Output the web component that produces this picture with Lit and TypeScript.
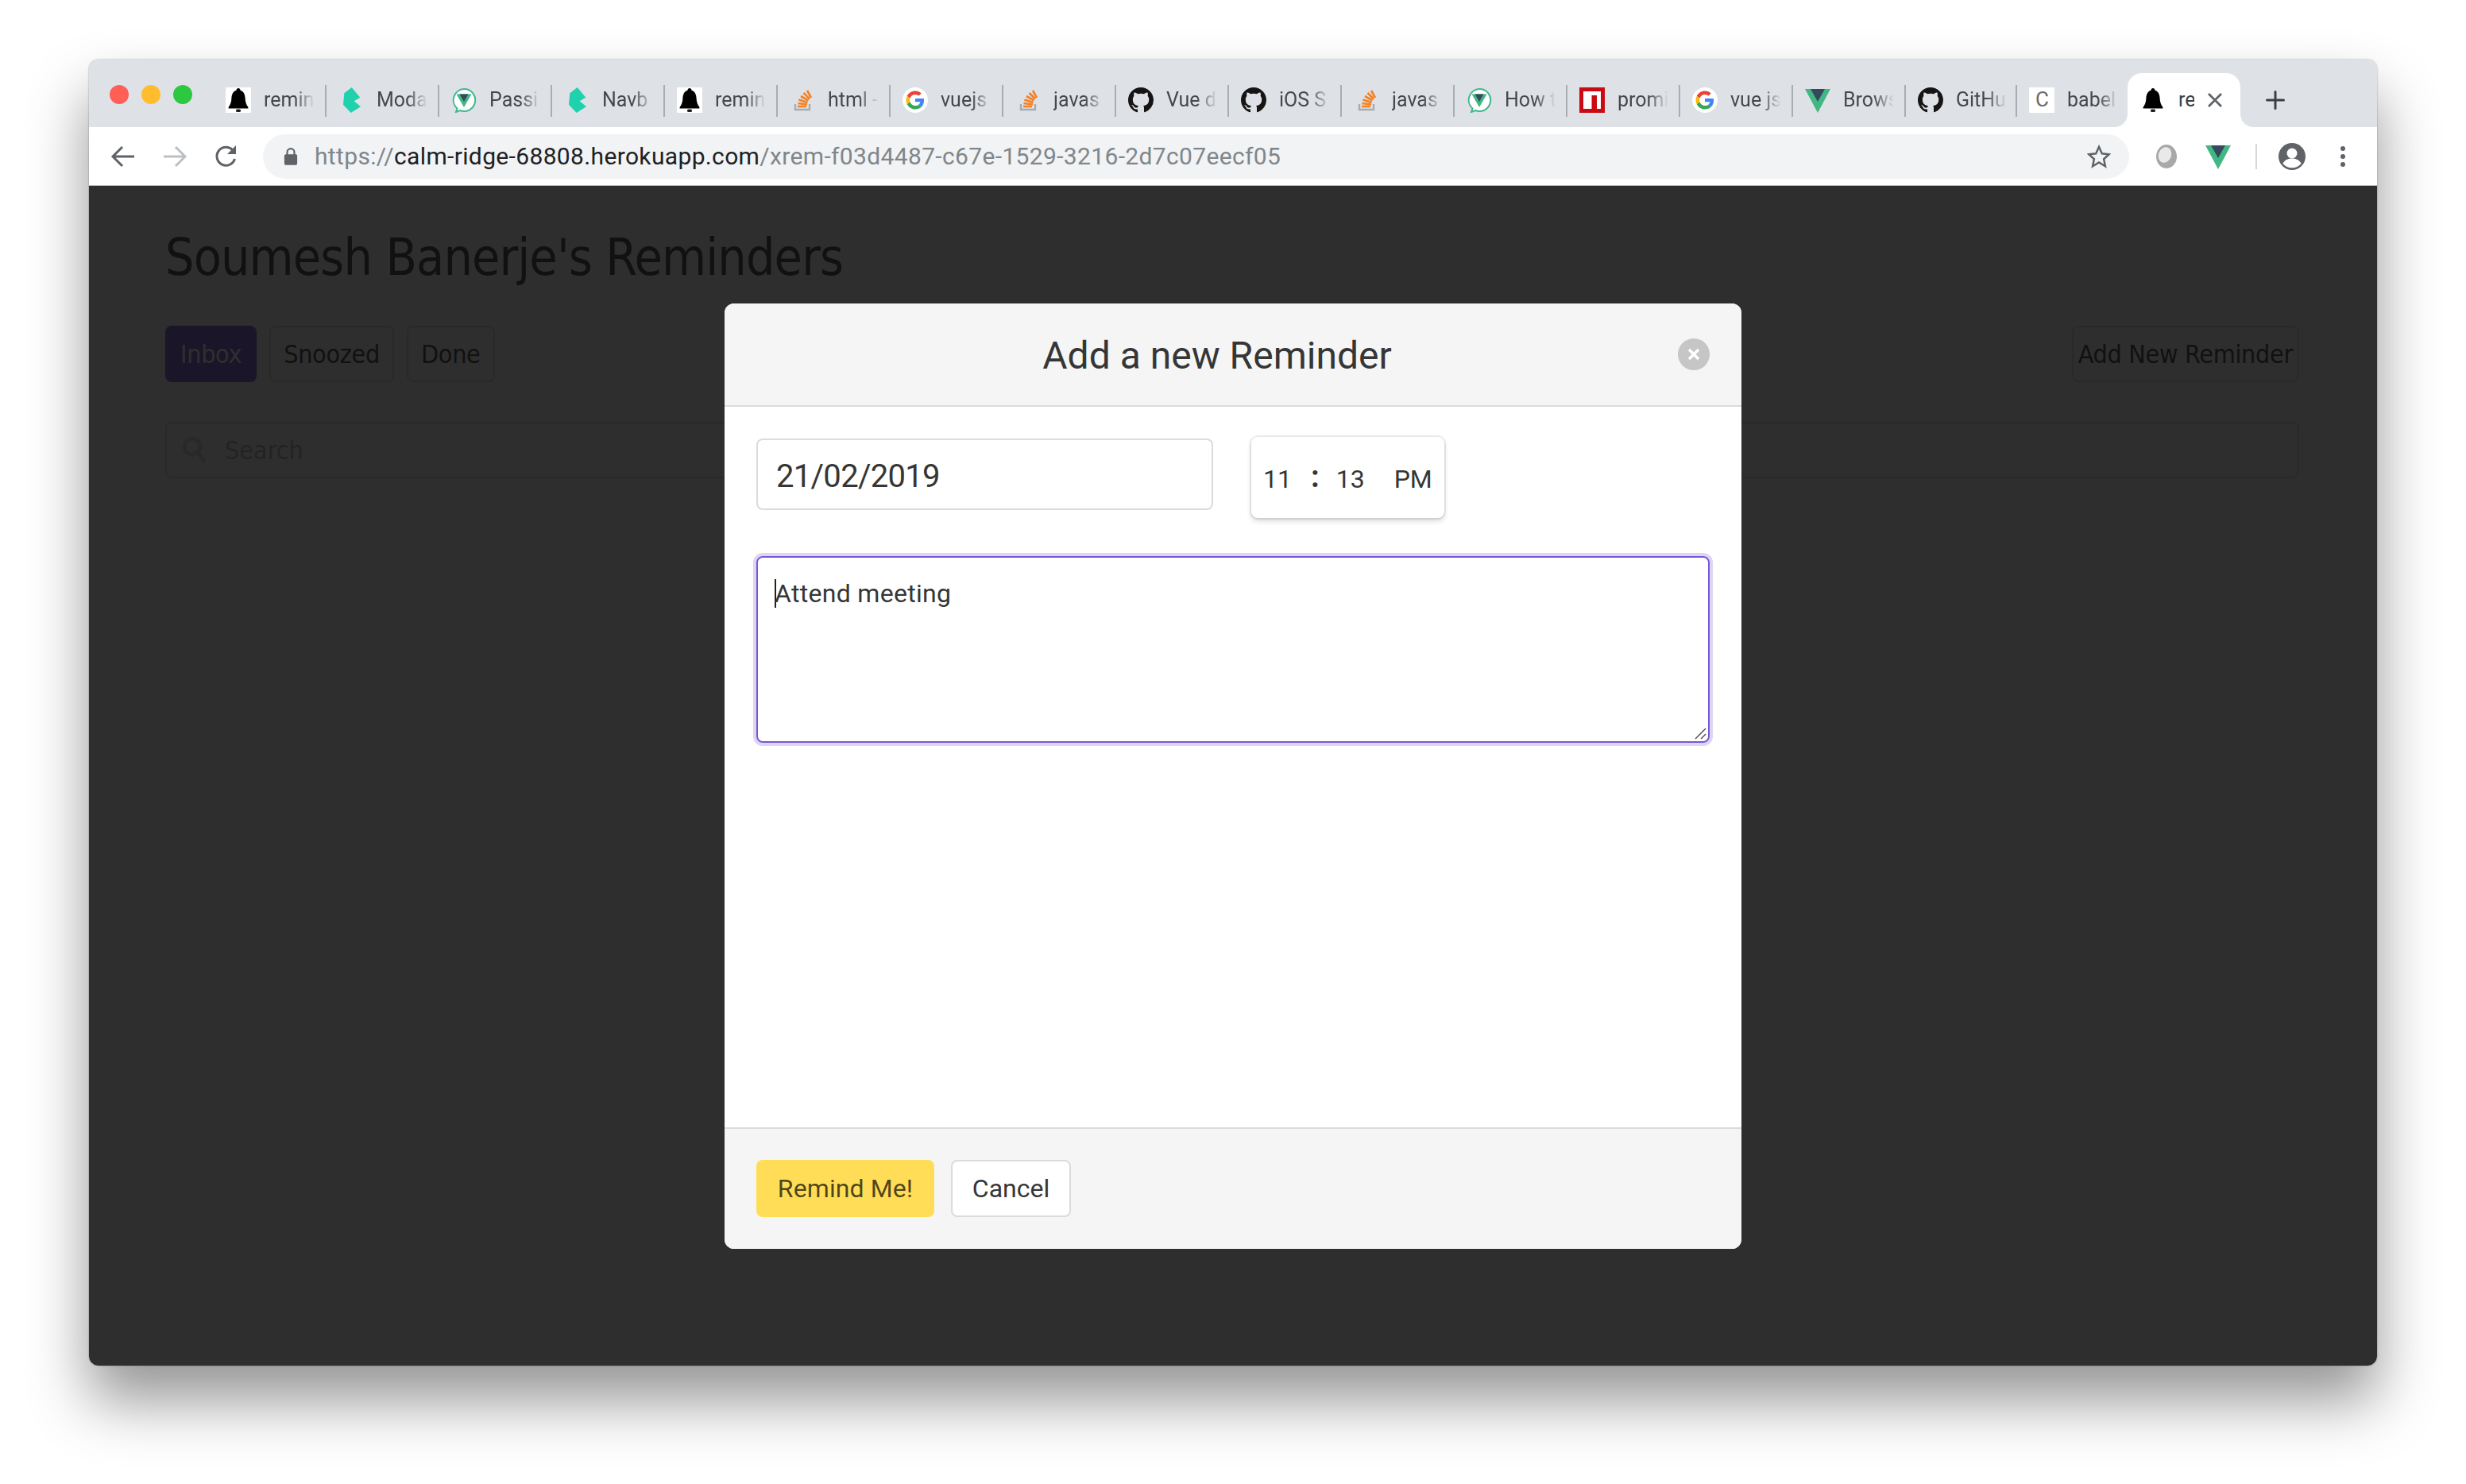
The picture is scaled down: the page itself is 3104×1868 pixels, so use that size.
import { LitElement, html, css } from "lit"
import { customElement } from "lit/decorators.js"

const bell = () => html`<svg viewBox="0 0 32 32" width="32" height="32">
  <path fill="#000" d="M16 1c1.5 0 2.4 1 2.4 2.6C22.6 5 24.4 9 24.6 13.5c.2 4.800 1 7.500 3.800 11.500v1.500H3.600V25c2.800-4 3.600-6.700 3.800-11.500C7.600 9 9.400 5 13.600 3.600 13.600 2 14.500 1 16 1z"/>
  <rect x="13" y="27.500" width="6" height="3.500" rx="1.500" fill="#222"/>
</svg>`

const buefy = () => html`<svg viewBox="0 0 32 32" width="32" height="32">
  <path fill="#1fd1ad" d="M16.700 0L27.300 12.700 19.700 17.300 28 24.300 15.700 32 6 21.700 7.300 7.300Z"/>
</svg>`

const vueChat = () => html`<svg viewBox="0 0 32 32" width="32" height="32">
  <path fill="#fff" stroke="#3fb98a" stroke-width="2" d="M16 2a14 14 0 1 1-5 27l-5 2 1.500-4.500A14 14 0 0 1 16 2z"/>
  <path fill="#41b883" d="M6.500 8.500h19L16 25z"/>
  <path fill="#35495e" d="M10.500 8.500h11L16 18z"/>
</svg>`

const stackOverflow = () => html`<svg viewBox="0 0 32 32" width="32" height="32">
  <path fill="none" stroke="#a8abaf" stroke-width="2.400" d="M7 21v7h18v-7"/>
  <g fill="none" stroke="#f48024" stroke-width="2.600">
    <path d="M10 24h11"/><path d="M10.500 20l11.500 1.500"/><path d="M11.500 15.500l11 3.500"/>
    <path d="M14 11l9.500 5.500"/><path d="M17.500 7l7.500 7.500"/><path d="M22 4l5 9"/>
  </g>
</svg>`

const google = () => html`<svg viewBox="0 0 32 32" width="32" height="32">
  <circle cx="16" cy="16" r="16" fill="#fff"/>
  <g transform="translate(4.500 4.500) scale(1.280)">
    <path fill="#EA4335" d="M9 3.480c1.690 0 2.830.730 3.480 1.340l2.540-2.480C13.460.890 11.430 0 9 0 5.480 0 2.440 2.020.960 4.960l2.910 2.260C4.600 5.050 6.620 3.480 9 3.480z"/>
    <path fill="#4285F4" d="M17.640 9.200c0-.740-.060-1.280-.190-1.840H9v3.340h4.960c-.100.830-.640 2.080-1.840 2.920l2.840 2.200c1.700-1.570 2.680-3.880 2.680-6.620z"/>
    <path fill="#FBBC05" d="M3.880 10.780A5.540 5.540 0 0 1 3.580 9c0-.620.110-1.220.290-1.780L.960 4.960A9.008 9.008 0 0 0 0 9c0 1.450.350 2.820.960 4.040l2.920-2.260z"/>
    <path fill="#34A853" d="M9 18c2.430 0 4.470-.800 5.960-2.180l-2.840-2.200c-.760.530-1.780.900-3.120.900-2.380 0-4.400-1.570-5.120-3.740L.970 13.040C2.450 15.980 5.480 18 9 18z"/>
  </g>
</svg>`

const github = () => html`<svg viewBox="0 0 16 16" width="32" height="32">
  <path fill="#161514" d="M8 0C3.580 0 0 3.580 0 8c0 3.540 2.290 6.530 5.470 7.590.400.070.550-.170.550-.380 0-.190-.010-.820-.010-1.490-2.010.370-2.530-.490-2.690-.940-.090-.230-.480-.940-.820-1.130-.280-.150-.680-.520-.010-.530.630-.010 1.080.580 1.230.820.720 1.210 1.870.870 2.330.660.070-.520.280-.870.510-1.070-1.780-.200-3.640-.890-3.640-3.950 0-.870.310-1.590.820-2.150-.080-.200-.360-1.020.080-2.120 0 0 .670-.210 2.200.820.640-.180 1.320-.270 2-.270.680 0 1.360.090 2 .270 1.530-1.040 2.200-.820 2.200-.820.440 1.100.160 1.920.080 2.120.510.560.820 1.270.820 2.150 0 3.070-1.870 3.750-3.650 3.950.290.250.540.730.540 1.480 0 1.070-.010 1.930-.010 2.200 0 .210.150.460.550.380A8.013 8.013 0 0016 8c0-4.420-3.580-8-8-8z"/>
</svg>`

const npm = () => html`<svg viewBox="0 0 32 32" width="32" height="32">
  <rect width="32" height="32" fill="#cb0b13"/>
  <rect x="5" y="5" width="22" height="22" fill="#fff"/>
  <rect x="15.500" y="10" width="6.500" height="17" fill="#cb0b13"/>
</svg>`

const vue = () => html`<svg viewBox="0 0 32 32" width="32" height="32">
  <path fill="#41b883" d="M0 2h32L16 32z"/>
  <path fill="#35495e" d="M7 2h18L16 18z"/>
</svg>`

const babel = () => html`<span class="babel">C</span>`

interface Tab {
  icon: () => unknown
  label: string
  width?: number
}

// labels hold only what the truncated tabs actually show
const TABS: Tab[] = [
  { icon: bell, label: "remin" },
  { icon: buefy, label: "Moda" },
  { icon: vueChat, label: "Passi" },
  { icon: buefy, label: "Navb" },
  { icon: bell, label: "remin" },
  { icon: stackOverflow, label: "html -" },
  { icon: google, label: "vuejs" },
  { icon: stackOverflow, label: "javas" },
  { icon: github, label: "Vue d" },
  { icon: github, label: "iOS S" },
  { icon: stackOverflow, label: "javas" },
  { icon: vueChat, label: "How t" },
  { icon: npm, label: "promi" },
  { icon: google, label: "vue js" },
  { icon: vue, label: "Brows" },
  { icon: github, label: "GitHu", width: 140 },
  { icon: babel, label: "babel", width: 139 },
]

@customElement("app-root")
export class AppRoot extends LitElement {
  static styles = css`
    :host {
      display: block;
      width: 3104px;
      height: 1868px;
      background: #fff;
      overflow: hidden;
    }

    .desktop {
      padding: 75px 112px 0;
    }

    .window {
      height: 1644px;
      border-radius: 12px;
      display: flex;
      flex-direction: column;
      box-shadow: 0 44px 76px rgba(0, 0, 0, 0.42), 0 0 2px rgba(0, 0, 0, 0.4);
      overflow: hidden;
    }

    /* tab strip */
    .strip {
      height: 85px;
      flex: none;
      background: #dee1e6;
      display: flex;
      align-items: stretch;
      font-family: Roboto, sans-serif;
    }

    .lights {
      width: 157px;
      flex: none;
      display: flex;
      gap: 16px;
      padding: 32px 0 0 26px;
      box-sizing: border-box;
    }

    .lights i {
      width: 24px;
      height: 24px;
      border-radius: 50%;
    }

    .tab {
      width: 142px;
      flex: none;
      box-sizing: border-box;
      padding: 35px 0 0 15px;
      display: flex;
      gap: 16px;
      position: relative;
    }

    .tab::after {
      content: "";
      position: absolute;
      right: 0;
      top: 32px;
      width: 2px;
      height: 40px;
      background: #a9acb0;
    }

    .tab.last::after {
      display: none;
    }

    .fav {
      width: 32px;
      height: 32px;
      flex: none;
      display: flex;
      justify-content: center;
    }

    .fav.plate {
      background: #fff;
    }

    .label {
      width: 64px;
      overflow: hidden;
      white-space: nowrap;
      font-size: 25px;
      line-height: 32px;
      color: #45484c;
      -webkit-mask-image: linear-gradient(90deg, #000 60%, transparent 100%);
      mask-image: linear-gradient(90deg, #000 60%, transparent 100%);
    }

    .babel {
      width: 36px;
      height: 32px;
      background: #fff;
      color: #6b6b6b;
      font-size: 26px;
      line-height: 30px;
      padding-left: 8px;
      box-sizing: border-box;
    }

    .tab.active {
      margin-top: 17px;
      height: 68px;
      background: #fff;
      border-radius: 18px 18px 0 0;
      padding: 18px 0 0 16px;
      position: relative;
    }

    .tab.active::before,
    .tab.active::after {
      content: "";
      display: block;
      position: absolute;
      top: auto;
      bottom: 0;
      width: 16px;
      height: 16px;
    }

    .tab.active::before {
      left: -16px;
      background: radial-gradient(circle at 0 0, transparent 15.500px, #fff 16px);
    }

    .tab.active::after {
      right: -16px;
      background: radial-gradient(circle at 100% 0, transparent 15.500px, #fff 16px);
    }

    .tab.active .label {
      width: 20px;
      -webkit-mask-image: none;
      mask-image: none;
      color: #3c4043;
    }

    .close {
      margin: 4px 0 0 -2px;
    }

    .plus {
      margin: 39px 0 0 32px;
    }

    /* toolbar */
    .toolbar {
      height: 73px;
      flex: none;
      background: #fff;
      border-bottom: 1px solid #b8babd;
      box-sizing: content-box;
      display: flex;
      align-items: center;
      padding-left: 26px;
    }

    .nav {
      width: 34px;
      height: 34px;
      flex: none;
      margin-right: 31px;
    }

    .omnibox {
      width: 2349px;
      height: 56px;
      flex: none;
      margin-left: -2px;
      background: #f1f3f4;
      border-radius: 28px;
      display: flex;
      align-items: center;
      padding-left: 26px;
      box-sizing: border-box;
      font-family: Roboto, sans-serif;
      font-size: 30px;
      color: #80868b;
    }

    .url {
      margin-left: 21px;
      flex: 1;
      letter-spacing: 0.35px;
      white-space: nowrap;
    }

    .url b {
      font-weight: 400;
      color: #202124;
    }

    .star {
      margin-right: 23px;
    }

    .actions {
      display: flex;
      align-items: center;
      flex: 1;
      padding-left: 32px;
    }

    .ext-gap {
      width: 34px;
    }

    .sep {
      width: 2px;
      height: 32px;
      background: #d6d8da;
      margin: 0 27px 0 31px;
    }

    .dots {
      margin-left: 43px;
    }

    /* page behind the dialog */
    .content {
      flex: 1;
      position: relative;
      background: #fff;
      overflow: hidden;
    }

    .page {
      padding: 52px 98px 0 96px;
      font-family: "DejaVu Sans Condensed", "DejaVu Sans", sans-serif;
      font-stretch: condensed;
      color: #363636;
      font-size: 32px;
    }

    .page h1 {
      margin: 0;
      font-size: 64px;
      font-weight: 400;
      line-height: 76px;
      letter-spacing: -0.9px;
    }

    .bar {
      display: flex;
      gap: 16px;
      margin-top: 48px;
      letter-spacing: -0.3px;
    }

    .bar button {
      font: inherit;
      letter-spacing: inherit;
      color: inherit;
      height: 71px;
      background: #fff;
      border: 2px solid #dbdbdb;
      border-radius: 8px;
      padding: 0 16px;
    }

    .bar .primary {
      background: #7957d5;
      border-color: #7957d5;
      color: #fff;
      padding: 0 17px;
    }

    .bar .right {
      margin-left: auto;
      padding: 0 6px;
    }

    .search {
      margin-top: 50px;
      height: 71px;
      border: 2px solid #dbdbdb;
      border-radius: 8px;
      display: flex;
      align-items: center;
      gap: 22px;
      padding-left: 19px;
      box-sizing: border-box;
      color: rgba(54, 54, 54, 0.4);
    }

    .overlay {
      position: absolute;
      inset: 0;
      background: rgba(10, 10, 10, 0.855);
    }

    /* dialog */
    .modal {
      position: absolute;
      left: 800px;
      top: 148px;
      width: 1280px;
      height: 1190px;
      border-radius: 12px;
      overflow: hidden;
      display: flex;
      flex-direction: column;
      background: #fff;
      font-family: Roboto, sans-serif;
      color: #363636;
    }

    .head {
      height: 128px;
      flex: none;
      background: #f5f5f5;
      border-bottom: 2px solid #dbdbdb;
      display: flex;
      align-items: center;
      padding: 0 40px;
    }

    .title {
      flex: 1;
      text-align: center;
      font-size: 48px;
      padding-top: 2px;
    }

    .delete {
      width: 40px;
      height: 40px;
      flex: none;
      border-radius: 50%;
      background: rgba(10, 10, 10, 0.2);
      display: flex;
      align-items: center;
      justify-content: center;
    }

    .body {
      flex: 1;
      padding: 40px;
    }

    .row {
      display: flex;
      align-items: flex-start;
      height: 100px;
    }

    .date {
      width: 575px;
      height: 90px;
      box-sizing: border-box;
      border: 2px solid #dbdbdb;
      border-radius: 8px;
      font-size: 40px;
      line-height: 92px;
      padding-left: 23px;
      letter-spacing: -0.7px;
    }

    .time {
      margin: -2px 0 0 48px;
      width: 243px;
      height: 102px;
      box-sizing: border-box;
      background: #fff;
      border-radius: 8px;
      box-shadow: 0 4px 6px rgba(10, 10, 10, 0.15), 0 0 0 2px rgba(10, 10, 10, 0.08);
      display: flex;
      align-items: center;
      font-size: 32px;
      padding: 4px 0 0 15px;
    }

    .time .colon {
      margin: -6px 21px 0 24px;
      font-size: 38px;
      font-weight: 700;
    }

    .time .mer {
      margin-left: 37px;
    }

    .area {
      margin-top: 48px;
      height: 235px;
      box-sizing: border-box;
      border: 2px solid #7957d5;
      border-radius: 8px;
      box-shadow: 0 0 0 4px rgba(121, 87, 213, 0.25);
      position: relative;
      padding: 23px 0 0 21px;
      font-size: 32px;
      line-height: 44px;
      letter-spacing: 0.3px;
    }

    .caret {
      display: inline-block;
      width: 2px;
      height: 36px;
      background: #222;
      vertical-align: -7px;
      margin-right: -2px;
    }

    .grip {
      position: absolute;
      right: 2px;
      bottom: 2px;
    }

    .foot {
      height: 153px;
      flex: none;
      box-sizing: border-box;
      background: #f5f5f5;
      border-top: 2px solid #dbdbdb;
      display: flex;
      align-items: flex-start;
      gap: 21px;
      padding: 39px 40px 0;
    }

    .foot button {
      font: inherit;
      font-size: 32px;
      width: 151px;
      height: 72px;
      border-radius: 8px;
      box-sizing: border-box;
      padding: 0;
      border: 2px solid #dbdbdb;
      background: #fff;
      color: #363636;
    }

    .foot .warning {
      width: 224px;
      letter-spacing: 0.1px;
      background: #ffdd57;
      border-color: transparent;
      color: rgba(0, 0, 0, 0.7);
    }
  `

  private renderTab(t: Tab, i: number) {
    const last = i === TABS.length - 1
    const style = t.width ? `width:${t.width}px` : ""
    const plate = t.icon === bell
    return html`<div class="tab ${last ? "last" : ""}" style=${style}>
      <span class="fav ${plate ? "plate" : ""}">${t.icon()}</span>
      <span class="label">${t.label}</span>
    </div>`
  }

  render() {
    return html`
      <div class="desktop">
        <div class="window">
          <div class="strip">
            <div class="lights">
              <i style="background:#ff5f57"></i>
              <i style="background:#ffbd2e"></i>
              <i style="background:#2cc840"></i>
            </div>
            ${TABS.map((t, i) => this.renderTab(t, i))}
            <div class="tab active">
              <span class="fav">${bell()}</span>
              <span class="label">re</span>
              <svg class="close" viewBox="0 0 24 24" width="24" height="24">
                <path d="M4 4l16 16M20 4L4 20" stroke="#5f6368" stroke-width="2.800" fill="none"/>
              </svg>
            </div>
            <svg class="plus" viewBox="0 0 24 24" width="24" height="24">
              <path d="M12 1.500v21M1.500 12h21" stroke="#3c4043" stroke-width="3" stroke-linecap="round" fill="none"/>
            </svg>
          </div>

          <div class="toolbar">
            <svg class="nav" viewBox="0 0 34 34">
              <path d="M31 17H5M16 5L4 17l12 12" stroke="#5f6368" stroke-width="3" fill="none"/>
            </svg>
            <svg class="nav" viewBox="0 0 34 34">
              <path d="M3 17h26M18 5l12 12-12 12" stroke="#bdc1c6" stroke-width="3" fill="none"/>
            </svg>
            <svg class="nav" viewBox="0 0 34 34">
              <path d="M27.500 20a11.500 11.500 0 1 1-3-11.500L28 12" stroke="#5f6368" stroke-width="3" fill="none"/>
              <path d="M29 3v11H18z" fill="#5f6368"/>
            </svg>
            <div class="omnibox">
              <svg viewBox="0 0 20 26" width="18" height="24">
                <path d="M5 11V7a5 5 0 0 1 10 0v4" stroke="#5f6368" stroke-width="2.400" fill="none"/>
                <rect x="1" y="10" width="18" height="15" rx="2" fill="#5f6368"/>
              </svg>
              <span class="url">https://<b>calm-ridge-68808.herokuapp.com</b>/xrem-f03d4487-c67e-1529-3216-2d7c07eecf05</span>
              <svg class="star" viewBox="0 0 32 32" width="30" height="30">
                <path d="M16 3l4 9 9.500 1-7 6.500 2 9.500-8.500-5-8.500 5 2-9.500-7-6.500 9.500-1z" stroke="#5f6368" stroke-width="2.600" fill="none"/>
              </svg>
            </div>
            <div class="actions">
              <svg viewBox="0 0 30 32" width="30" height="32">
                <ellipse cx="15" cy="16" rx="13" ry="15" fill="#a8a8a8"/>
                <ellipse cx="13" cy="14" rx="8" ry="10" fill="#e9e9e9" transform="rotate(20 13 14)"/>
              </svg>
              <span class="ext-gap"></span>
              ${vue()}
              <span class="sep"></span>
              <svg viewBox="0 0 34 34" width="34" height="34">
                <circle cx="17" cy="17" r="17" fill="#5f6368"/>
                <circle cx="17" cy="13" r="6.500" fill="#fff"/>
                <path d="M5.500 26c2-5 7-6.500 11.500-6.500S26.500 21 28.500 26a15 15 0 0 1-23 0z" fill="#fff"/>
              </svg>
              <svg class="dots" viewBox="0 0 8 30" width="8" height="30">
                <circle cx="4" cy="5" r="3" fill="#5f6368"/>
                <circle cx="4" cy="15" r="3" fill="#5f6368"/>
                <circle cx="4" cy="25" r="3" fill="#5f6368"/>
              </svg>
            </div>
          </div>

          <div class="content">
            <div class="page">
              <h1>Soumesh Banerje's Reminders</h1>
              <div class="bar">
                <button class="primary">Inbox</button>
                <button>Snoozed</button>
                <button>Done</button>
                <button class="right">Add New Reminder</button>
              </div>
              <div class="search">
                <svg viewBox="0 0 32 36" width="32" height="36">
                  <circle cx="13" cy="13" r="10" stroke="#dbdbdb" stroke-width="5" fill="none"/>
                  <path d="M20 21l9 12" stroke="#dbdbdb" stroke-width="5" fill="none"/>
                </svg>
                <span>Search</span>
              </div>
            </div>
            <div class="overlay"></div>

            <div class="modal">
              <div class="head">
                <div class="title">Add a new Reminder</div>
                <div class="delete">
                  <svg viewBox="0 0 16 16" width="16" height="16">
                    <path d="M2 2l12 12M14 2L2 14" stroke="#fff" stroke-width="3.500" fill="none"/>
                  </svg>
                </div>
              </div>
              <div class="body">
                <div class="row">
                  <div class="date">21/02/2019</div>
                  <div class="time">
                    <span>11</span><span class="colon">:</span><span>13</span><span class="mer">PM</span>
                  </div>
                </div>
                <div class="area">
                  <span class="caret"></span>Attend meeting
                  <svg class="grip" viewBox="0 0 16 16" width="16" height="16">
                    <path d="M15 2L2 15M15 9l-6 6" stroke="#555" stroke-width="1.500" fill="none"/>
                  </svg>
                </div>
              </div>
              <div class="foot">
                <button class="warning">Remind Me!</button>
                <button>Cancel</button>
              </div>
            </div>
          </div>
        </div>
      </div>
    `
  }
}
